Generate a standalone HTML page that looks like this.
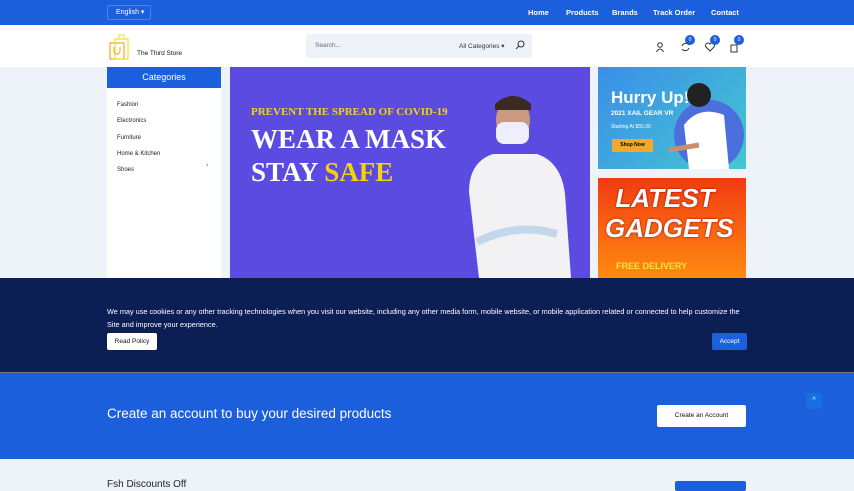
<!DOCTYPE html>
<html><head><style>
*{margin:0;padding:0;box-sizing:border-box}
body{width:854px;height:485px;overflow:hidden;background:#eef3fa;font-family:"Liberation Sans",sans-serif;position:relative}
.a{position:absolute}
</style></head><body>
<div class="a" style="left:0;top:0;width:854px;height:25px;background:#1c5fdc"></div>
<div class="a" style="left:107px;top:5px;width:44px;height:15px;border:1px solid #4d82ea;border-radius:2px;color:#fff;font-size:7px;line-height:13px;padding-left:8px">English &#9662;</div>
<div class="a" style="top:8px;left:528px;color:#fff;font-size:7.5px;font-weight:bold;word-spacing:0">
<span class="a" style="left:0">Home</span><span class="a" style="left:38px;white-space:nowrap">Products</span><span class="a" style="left:84px">Brands</span><span class="a" style="left:125px;white-space:nowrap">Track Order</span><span class="a" style="left:183px">Contact</span></div>
<div class="a" style="left:0;top:25px;width:854px;height:42px;background:#fff"></div>
<svg class="a" style="left:109px;top:33px" width="28" height="28" viewBox="0 0 28 28"><rect x="1" y="10" width="14" height="16" fill="none" stroke="#f5a623" stroke-width="1.2"/><rect x="6" y="6" width="13" height="20" fill="none" stroke="#f7e024" stroke-width="1.2"/><path d="M10 6 V2 h5 v4" fill="none" stroke="#f7e024"/><path d="M5 14 v4 a3 3 0 0 0 6 0 v-4" fill="none" stroke="#f5a623"/></svg>
<div class="a" style="left:137px;top:50px;font-size:6.5px;color:#111">The Third Store</div>
<div class="a" style="left:306px;top:34px;width:226px;height:24px;background:#eef3fa;border-radius:2px"></div>
<div class="a" style="left:315px;top:42px;font-size:6.5px;color:#666">Search...</div>
<div class="a" style="left:459px;top:42px;font-size:6.5px;color:#333">All Categories &#9662;</div>
<svg class="a" style="left:515px;top:40px" width="10" height="10" viewBox="0 0 10 10"><circle cx="6" cy="4" r="3" fill="none" stroke="#333"/><path d="M4 6 L1 9" stroke="#333"/></svg>
<svg class="a" style="left:655px;top:41px" width="90" height="12" viewBox="0 0 90 12"><circle cx="5" cy="4" r="2.3" fill="none" stroke="#333"/><path d="M1.5 11 q3.5-6 7 0" fill="none" stroke="#333"/><path d="M27 5 a4 4 0 0 1 7 -1 M34 7 a4 4 0 0 1 -7 1" fill="none" stroke="#333"/><path d="M55 10 l-4-4 a2 2 0 0 1 4-3 a2 2 0 0 1 4 3z" fill="none" stroke="#333"/><rect x="76" y="4" width="6" height="7" fill="none" stroke="#333"/></svg>
<div class="a" style="left:685px;top:35px;width:10px;height:10px;border-radius:50%;background:#1c5fdc;color:#fff;font-size:5px;text-align:center;line-height:10px">0</div>
<div class="a" style="left:710px;top:35px;width:10px;height:10px;border-radius:50%;background:#1c5fdc;color:#fff;font-size:5px;text-align:center;line-height:10px">0</div>
<div class="a" style="left:734px;top:35px;width:10px;height:10px;border-radius:50%;background:#1c5fdc;color:#fff;font-size:5px;text-align:center;line-height:10px">0</div>
<div class="a" style="left:107px;top:67px;width:114px;height:211px;background:#fff"></div>
<div class="a" style="left:107px;top:67px;width:114px;height:21px;background:#1c5fdc;color:#fff;font-size:9px;text-align:center;line-height:21px">Categories</div>
<div class="a" style="left:117px;top:97px;font-size:6px;color:#222;line-height:16.3px">Fashion<br>Electronics<br>Furniture<br>Home &amp; Kitchen<br>Shoes</div>
<div class="a" style="left:206px;top:162px;font-size:7px;color:#666">›</div>
<div class="a" style="left:230px;top:67px;width:360px;height:211px;background:#5b4be0"></div>
<div class="a" style="left:251px;top:106px;font-family:'Liberation Serif',serif;font-weight:bold;font-size:11px;color:#f5d20d">PREVENT THE SPREAD OF COVID-19</div>
<div class="a" style="left:251px;top:123px;font-family:'Liberation Serif',serif;font-weight:bold;font-size:27px;color:#fff;line-height:33px">WEAR A MASK<br>STAY <span style="color:#f5d20d">SAFE</span></div>
<svg class="a" style="left:459px;top:92px" width="124" height="186" viewBox="0 0 124 186"><ellipse cx="54" cy="28" rx="17" ry="22" fill="#c99a7f"/><path d="M36 12 q18-16 36 0 v6 h-36z" fill="#3a2a22"/><rect x="37" y="30" width="33" height="22" rx="8" fill="#eef"/><path d="M10 100 q0-30 24-38 h44 q24 8 28 40 l6 84 h-92z" fill="#f2f2f4"/><path d="M18 150 q40-20 80 -8" stroke="#c4d6ea" stroke-width="8" fill="none"/></svg>
<div class="a" style="left:598px;top:67px;width:148px;height:102px;background:linear-gradient(135deg,#3a8ee8,#45c7d0)"></div>
<div class="a" style="left:611px;top:88px;font-weight:bold;font-size:17px;color:#fff">Hurry Up!</div>
<div class="a" style="left:611px;top:110px;font-weight:bold;font-size:6.5px;color:#fff">2021 XAIL GEAR VR</div>
<div class="a" style="left:611px;top:124px;font-size:5px;color:#fff">Starting At $55.00</div>
<div class="a" style="left:612px;top:139px;width:41px;height:13px;background:#f2a92b;font-size:5px;text-align:center;line-height:13px;font-weight:bold">Shop Now</div>
<svg class="a" style="left:664px;top:80px" width="80" height="89" viewBox="0 0 80 89"><circle cx="45" cy="55" r="35" fill="#4b6fdc"/><circle cx="35" cy="15" r="12" fill="#222"/><path d="M20 45 q15-20 40-10 l5 54 h-40z" fill="#fff"/><path d="M5 70 l30-5" stroke="#c8906e" stroke-width="5"/></svg>
<div class="a" style="left:598px;top:178px;width:148px;height:100px;background:linear-gradient(180deg,#f23b12,#ff8a10)"></div>
<div class="a" style="left:605px;top:183px;font-weight:bold;font-style:italic;font-size:26px;color:#fff;line-height:30px;text-align:center;width:120px;text-shadow:0 0 2px #800">LATEST<br>GADGETS</div>
<div class="a" style="left:616px;top:261px;font-weight:bold;font-size:9px;color:#ffe23a">FREE DELIVERY</div>
<div class="a" style="left:0;top:278px;width:854px;height:94px;background:#0b1f55"></div>
<div class="a" style="left:107px;top:305px;width:645px;font-size:7.3px;color:#fff;line-height:13px">We may use cookies or any other tracking technologies when you visit our website, including any other media form, mobile website, or mobile application related or connected to help customize the Site and improve your experience.</div>
<div class="a" style="left:107px;top:333px;width:50px;height:17px;background:#fff;border-radius:2px;font-size:6.5px;text-align:center;line-height:17px;color:#111">Read Policy</div>
<div class="a" style="left:712px;top:333px;width:35px;height:17px;background:#1c5fdc;border-radius:2px;font-size:6.5px;text-align:center;line-height:17px;color:#fff">Accept</div>
<div class="a" style="left:0;top:372px;width:854px;height:1px;background:#777"></div>
<div class="a" style="left:0;top:373px;width:854px;height:86px;background:#1c5fdc"></div>
<div class="a" style="left:107px;top:406px;font-size:13.5px;color:#fff">Create an account to buy your desired products</div>
<div class="a" style="left:657px;top:405px;width:89px;height:22px;background:#fff;border-radius:2px;font-size:6.5px;text-align:center;line-height:22px;color:#111">Create an Account</div>
<div class="a" style="left:806px;top:393px;width:16px;height:16px;background:#1670e0;border-radius:3px;color:#fff;font-size:7px;text-align:center;line-height:16px">^</div>
<div class="a" style="left:107px;top:479px;font-size:10px;color:#222">Fsh Discounts Off</div>
<div class="a" style="left:675px;top:481px;width:71px;height:10px;background:#1c5fdc;border-radius:2px"></div>
</body></html>
